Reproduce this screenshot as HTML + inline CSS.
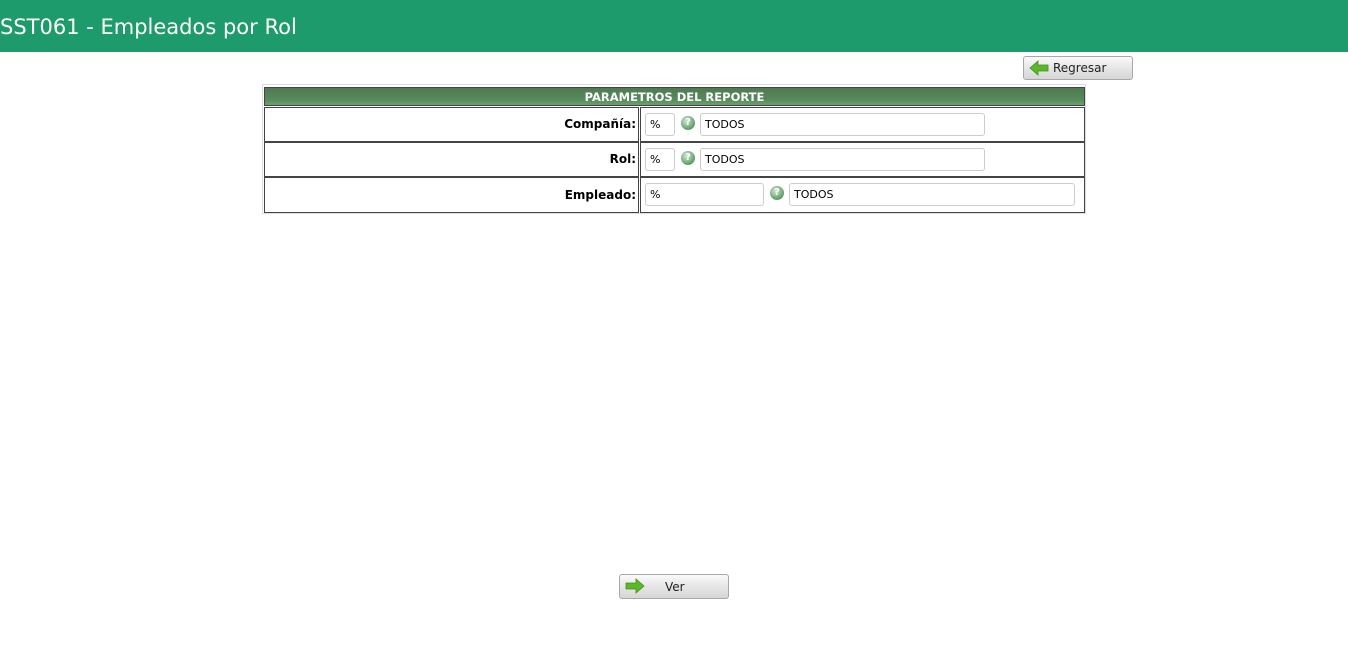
<!DOCTYPE html>
<html><head><meta charset="utf-8"><style>
body{margin:0;width:1348px;height:656px;position:relative;background:#fff;font-family:"DejaVu Sans","Liberation Sans",sans-serif;overflow:hidden}
.a{position:absolute;box-sizing:border-box}
.hdr{left:0;top:0;width:1348px;height:52px;background:#1e9b6c;color:#fff;font-size:21px;line-height:54px;padding-left:0}
.btn{border:1px solid #a8a8a8;border-radius:3px;background:linear-gradient(#fafafa,#e6e6e6 50%,#d6d6d6);font-size:12px;color:#222}
.cell{border:1px solid #444}
.lbl{font-weight:bold;font-size:12px;text-align:right;padding-right:2px;color:#000}
.inp{border:1px solid #ccc;border-radius:3px;font-size:11px;padding-left:4px;line-height:21px;color:#000;background:#fff}
.q{width:14px;height:14px;border-radius:50%;background:radial-gradient(circle at 40% 35%,#cfe8cf,#5e9c66 70%);color:#fff;font-size:10px;font-weight:bold;text-align:center;line-height:14px}
</style></head><body>
<div class="a hdr">SST061 - Empleados por Rol</div>

<div class="a btn" style="left:1023px;top:56px;width:110px;height:24px">
<svg class="a" style="left:5px;top:3px" width="20" height="16" viewBox="0 0 20 16"><path d="M1 8 L9 1 V5 H19 V11 H9 V15 Z" fill="#5cb82a" stroke="#3f8f1a" stroke-width="0.8"/></svg>
<span class="a" style="left:29px;top:4px">Regresar</span></div>

<div class="a" style="left:262px;top:84px;width:824px;height:130px;border:1px solid #ddd"></div>
<div class="a" style="left:264px;top:87px;width:821px;height:19px;background:linear-gradient(#4f7a52,#578a5c 70%,#6aa36e);border:1px solid #444;color:#fff;font-weight:bold;font-size:11.5px;text-align:center;line-height:18px">PARAMETROS DEL REPORTE</div>

<div class="a cell lbl" style="left:264px;top:107px;width:375px;height:35px;line-height:33px">Compañía:</div>
<div class="a cell" style="left:640px;top:107px;width:445px;height:35px"></div>
<div class="a inp" style="left:645px;top:113px;width:30px;height:23px">%</div>
<div class="a q" style="left:681px;top:116px">?</div>
<div class="a inp" style="left:700px;top:113px;width:285px;height:23px">TODOS</div>

<div class="a cell lbl" style="left:264px;top:142px;width:375px;height:35px;line-height:33px">Rol:</div>
<div class="a cell" style="left:640px;top:142px;width:445px;height:35px"></div>
<div class="a inp" style="left:645px;top:148px;width:30px;height:23px">%</div>
<div class="a q" style="left:681px;top:151px">?</div>
<div class="a inp" style="left:700px;top:148px;width:285px;height:23px">TODOS</div>

<div class="a cell lbl" style="left:264px;top:177px;width:375px;height:36px;line-height:34px">Empleado:</div>
<div class="a cell" style="left:640px;top:177px;width:445px;height:36px"></div>
<div class="a inp" style="left:645px;top:183px;width:119px;height:23px">%</div>
<div class="a q" style="left:770px;top:186px">?</div>
<div class="a inp" style="left:789px;top:183px;width:286px;height:23px">TODOS</div>

<div class="a btn" style="left:619px;top:574px;width:110px;height:25px">
<svg class="a" style="left:5px;top:3px" width="20" height="16" viewBox="0 0 20 16"><path d="M19 8 L11 1 V5 H1 V11 H11 V15 Z" fill="#5cb82a" stroke="#3f8f1a" stroke-width="0.8"/></svg>
<span class="a" style="left:45px;top:5px">Ver</span></div>
</body></html>
